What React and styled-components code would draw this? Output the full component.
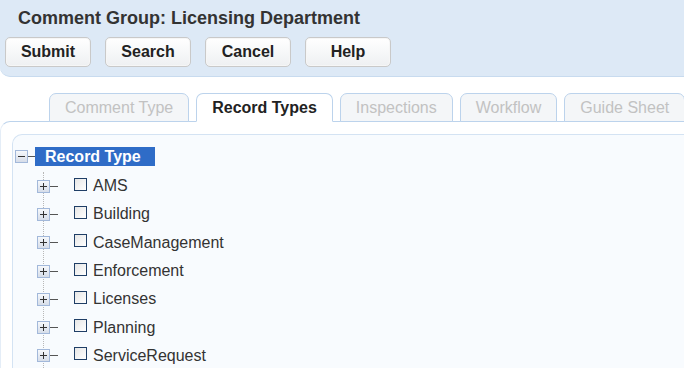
import React from "react";
import styled, { createGlobalStyle } from "styled-components";

const Global = createGlobalStyle`
  html, body { margin: 0; padding: 0; background: #fff; }
  body { font-family: "Liberation Sans", Arial, sans-serif; color: #333; overflow: hidden; }
`;

const Page = styled.div`
  width: 684px;
  height: 368px;
  overflow: hidden;
  background: #fff;
`;

const Header = styled.div`
  height: 77px;
  box-sizing: border-box;
  background: #dde9f6;
  border-bottom: 1px solid #c8dbef;
  border-bottom-left-radius: 10px;
  padding: 8px 0 0 5px;
  display: flex;
  flex-direction: column;
  gap: 9px;
`;

const Title = styled.h1`
  margin: 0 0 0 13px;
  font-size: 18px;
  font-weight: bold;
  line-height: 20px;
  color: #333;
`;

const ButtonRow = styled.div`
  display: flex;
  gap: 14px;
`;

const Button = styled.button`
  width: 86px;
  height: 30px;
  box-sizing: border-box;
  border: 1px solid #c9c9c9;
  border-radius: 5px;
  background: linear-gradient(#ffffff, #eef0f2);
  box-shadow: inset 0 0 0 1px #f6f6f6;
  font-family: "Liberation Sans", Arial, sans-serif;
  font-size: 16px;
  font-weight: bold;
  color: #222;
  padding: 0;
`;

const TabBar = styled.div`
  display: flex;
  gap: 7px;
  padding-left: 49px;
  margin-top: 16px;
  height: 29px;
  position: relative;
  z-index: 1;
`;

const Tab = styled.div`
  height: 29px;
  box-sizing: border-box;
  padding: 0 15px;
  border: 1px solid #bcd3ec;
  border-bottom: ${(p) => (p.$active ? "1px solid #fff" : "1px solid #bcd3ec")};
  border-radius: 7px 7px 0 0;
  background: ${(p) => (p.$active ? "#fff" : "#f4f6f8")};
  color: ${(p) => (p.$active ? "#222" : "#c2c2c2")};
  font-size: 16px;
  font-weight: ${(p) => (p.$active ? "bold" : "normal")};
  display: flex;
  align-items: center;
  white-space: nowrap;
`;

const Body = styled.div`
  margin-top: -1px;
  border-top: 1px solid #bcd3ec;
  border-left: 1px solid #e4edf7;
  border-top-left-radius: 10px;
  padding: 12px 0 0 11px;
`;

const Panel = styled.div`
  background: #f8fbfe;
  border: 1px solid #d4e3f3;
  border-right: none;
  border-top-left-radius: 10px;
  height: 260px;
  padding: 12px 0 0 2px;
`;

const RootRow = styled.div`
  display: flex;
  align-items: center;
  height: 19px;
`;

const ExpandBox = styled.span`
  width: 13px;
  height: 13px;
  box-sizing: border-box;
  border: 1px solid #a2b8da;
  background: linear-gradient(#f6f8fb, #d6dde9);
  position: relative;
  flex-shrink: 0;
  &::before {
    content: "";
    position: absolute;
    left: 2px;
    top: 5px;
    width: 7px;
    height: 1px;
    background: #333;
  }
  &::after {
    content: "";
    display: ${(p) => (p.$open ? "none" : "block")};
    position: absolute;
    left: 5px;
    top: 2px;
    width: 1px;
    height: 7px;
    background: #333;
  }
`;

const HLine = styled.span`
  width: ${(p) => p.$w}px;
  height: 1px;
  background: #555;
  flex-shrink: 0;
`;

const RootLabel = styled.span`
  background: #2f6cc7;
  color: #fff;
  font-size: 16px;
  font-weight: bold;
  padding: 0 10px;
  width: 120px;
  box-sizing: border-box;
  height: 19px;
  line-height: 19px;
`;

const Children = styled.div`
  margin-left: 22px;
  margin-top: 6px;
  position: relative;
  &::before {
    content: "";
    position: absolute;
    left: 6px;
    top: 0;
    bottom: 0;
    border-left: 1px dotted #b8b8b8;
  }
`;

const Row = styled.div`
  display: flex;
  align-items: center;
  height: 28.3px;
  position: relative;
`;

const Check = styled.span`
  width: 13px;
  height: 13px;
  box-sizing: border-box;
  border: 1px solid #1f3e66;
  background: linear-gradient(135deg, #e6e6e6, #ffffff);
  margin-left: 16px;
  margin-top: -4px;
  flex-shrink: 0;
`;

const Label = styled.span`
  margin-left: 6px;
  font-size: 16px;
  color: #333;
  white-space: nowrap;
`;

const tabs = ["Comment Type", "Record Types", "Inspections", "Workflow", "Guide Sheet"];
const items = ["AMS", "Building", "CaseManagement", "Enforcement", "Licenses", "Planning", "ServiceRequest"];

export default function App() {
  return (
    <Page>
      <Global />
      <Header>
        <Title>Comment Group: Licensing Department</Title>
        <ButtonRow>
          {["Submit", "Search", "Cancel", "Help"].map((b) => (
            <Button key={b}>{b}</Button>
          ))}
        </ButtonRow>
      </Header>
      <TabBar>
        {tabs.map((t) => (
          <Tab key={t} $active={t === "Record Types"}>{t}</Tab>
        ))}
      </TabBar>
      <Body>
        <Panel>
          <RootRow>
            <ExpandBox $open />
            <HLine $w={7} />
            <RootLabel>Record Type</RootLabel>
          </RootRow>
          <Children>
            {items.map((it) => (
              <Row key={it}>
                <ExpandBox />
                <HLine $w={8} />
                <Check />
                <Label>{it}</Label>
              </Row>
            ))}
          </Children>
        </Panel>
      </Body>
    </Page>
  );
}
